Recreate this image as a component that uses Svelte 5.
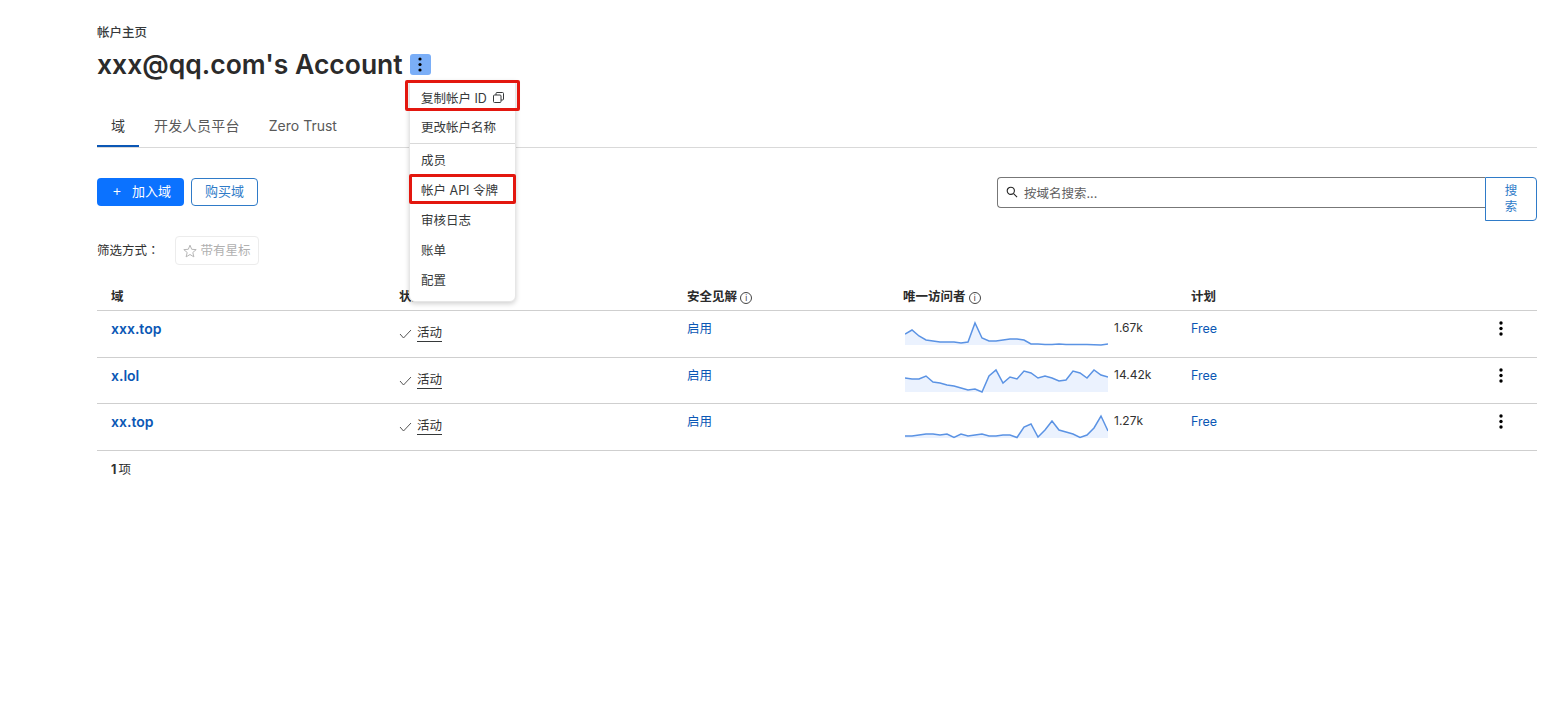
<script lang="ts">
    const menuItems = [
        { label: "复制帐户 ID", copy: true, divider: false, mark: true },
        { label: "更改帐户名称", copy: false, divider: true, mark: false },
        { label: "成员", copy: false, divider: false, mark: false },
        { label: "帐户 API 令牌", copy: false, divider: false, mark: true },
        { label: "审核日志", copy: false, divider: false, mark: false },
        { label: "账单", copy: false, divider: false, mark: false },
        { label: "配置", copy: false, divider: false, mark: false },
    ];

    // y values are px above the sparkline's baseline
    const rows = [
        {
            name: "xxx.top",
            visitors: "1.67k",
            ys: [11, 15, 9, 5, 4, 3, 3, 3, 2, 3, 22, 7, 4, 4, 5, 6, 6, 5, 1, 1, 0.6, 0.6, 1, 0.6, 0.6, 0.6, 0.6, 0.3, 0, 1],
        },
        {
            name: "x.lol",
            visitors: "14.42k",
            ys: [14, 13, 13, 16, 10, 9, 7, 6, 4, 2, 3, 0, 16, 22, 9, 15, 13, 21, 19, 14, 16, 14, 11, 12, 21, 19, 14, 22, 17, 15],
        },
        {
            name: "xx.top",
            visitors: "1.27k",
            ys: [2, 2, 3, 4, 4, 3, 4, 0.5, 4, 2, 3, 4, 2, 2, 3, 3, 0.5, 11, 14, 1, 8, 17, 8, 6, 4, 0.5, 3, 10, 22, 7],
        },
    ];

    const W = 203;
    const H = 30;

    function linePoints(ys: number[]) {
        return ys.map((y, i) => `${((i * W) / (ys.length - 1)).toFixed(1)},${H - 1 - y}`).join(" ");
    }
</script>

<main class="page">
    <div class="crumb">帐户主页</div>
    <div class="title-row">
        <h1>xxx@qq.com's Account</h1>
        <button class="kebab-btn" aria-label="更多">
            <svg width="4" height="15" viewBox="0 0 4 15"><circle cx="2" cy="2" r="1.6" /><circle cx="2" cy="7.5" r="1.6" /><circle cx="2" cy="13" r="1.6" /></svg>
        </button>
        <div class="menu">
            {#each menuItems as item}
                <div class="menu-item" class:divider={item.divider} class:mark={item.mark}>
                    <span>{item.label}</span>
                    {#if item.copy}
                        <svg width="11" height="11" viewBox="0 0 11 11" fill="none" stroke="#36393a" stroke-width="1">
                            <rect x="0.5" y="3" width="7.5" height="7.5" rx="1" />
                            <path d="M3 3V1.5a1 1 0 0 1 1-1h5.5a1 1 0 0 1 1 1V7a1 1 0 0 1-1 1H8" />
                        </svg>
                    {/if}
                </div>
            {/each}
        </div>
    </div>

    <nav class="tabs">
        <span class="tab active">域</span>
        <span class="tab wide">开发人员平台</span>
        <span class="tab">Zero Trust</span>
    </nav>

    <div class="toolbar">
        <button class="btn primary"><span class="plus">+</span>加入域</button>
        <button class="btn outline">购买域</button>
        <div class="search">
            <div class="search-input">
                <svg width="12" height="12" viewBox="0 0 13 13" fill="none" stroke="#222" stroke-width="1.2">
                    <circle cx="5.2" cy="5.2" r="3.9" />
                    <path d="M8.2 8.2 12 12" />
                </svg>
                <span>按域名搜索...</span>
            </div>
            <button class="search-btn">搜索</button>
        </div>
    </div>

    <div class="filter">
        <span class="filter-label">筛选方式：</span>
        <span class="chip">
            <svg width="14" height="14" viewBox="0 0 14 14" fill="none" stroke="#b5b5b5" stroke-width="1">
                <path d="M7 1.2 8.7 5.3 13.2 5.6 9.8 8.5 10.9 12.9 7 10.5 3.1 12.9 4.2 8.5 0.8 5.6 5.3 5.3Z" />
            </svg>
            <span class="chip-text">带有星标</span>
        </span>
    </div>

    <div class="grid head">
        <div>域</div>
        <div>状态</div>
        <div>安全见解 <span class="info">i</span></div>
        <div>唯一访问者 <span class="info">i</span></div>
        <div>计划</div>
        <div></div>
    </div>

    {#each rows as row}
        <div class="grid row">
            <div><a class="domain" href="#top">{row.name}</a></div>
            <div class="status">
                <svg width="13" height="10" viewBox="0 0 13 10" fill="none" stroke="#555" stroke-width="1">
                    <path d="M1 5 4.5 9 12 1" />
                </svg>
                <span class="status-text">活动</span>
            </div>
            <div class="enabled"><span class="link">启用</span></div>
            <div class="visitors">
                <svg width={W} height={H} viewBox="0 0 {W} {H}">
                    <polygon points="0,{H - 1} {linePoints(row.ys)} {W},{H - 1}" fill="#ebf2fe" />
                    <polyline points={linePoints(row.ys)} fill="none" stroke="#5b93e4" stroke-width="1.5" />
                </svg>
                <span class="count">{row.visitors}</span>
            </div>
            <div class="plan"><span class="link">Free</span></div>
            <div class="row-menu">
                <svg width="4" height="15" viewBox="0 0 4 15"><circle cx="2" cy="2" r="1.7" /><circle cx="2" cy="7.5" r="1.7" /><circle cx="2" cy="13" r="1.7" /></svg>
            </div>
        </div>
    {/each}

    <div class="footer"><b>1</b><span class="footer-unit">项</span></div>
</main>

<style>
    :global(body) {
        margin: 0;
        background: #fff;
        color: #313131;
        font-family: Inter, "Noto Sans CJK SC", sans-serif;
    }

    .page {
        padding: 25px 21px 0 97px;
        font-size: 12.5px;
    }

    .crumb {
        font-size: 12.5px;
        font-weight: 500;
        line-height: 16px;
        color: #36393a;
    }

    .title-row {
        position: relative;
        display: flex;
        align-items: center;
        gap: 7px;
        margin-top: 5px;
        height: 36px;
    }

    h1 {
        margin: 0;
        font-size: 26.5px;
        font-weight: 600;
        line-height: 36px;
        color: #2b2b2b;
    }

    .kebab-btn {
        display: flex;
        align-items: center;
        justify-content: center;
        width: 21px;
        height: 21px;
        padding: 0;
        border: 0;
        border-radius: 3px;
        background: #7aaef7;
    }

    .menu {
        position: absolute;
        left: 312px;
        top: 34px;
        z-index: 2;
        width: 107px;
        background: #fff;
        border: 1px solid #e6e6e6;
        border-radius: 0 0 6px 6px;
        box-shadow: 0 2px 5px rgba(0, 0, 0, 0.18);
        box-sizing: border-box;
    }

    .menu-item {
        position: relative;
        display: flex;
        align-items: center;
        gap: 6px;
        height: 30px;
        padding-left: 11px;
        box-sizing: border-box;
        font-size: 12.5px;
        color: #36393a;
        white-space: nowrap;
    }

    .menu-item:first-child {
        padding-top: 2px;
    }

    .menu-item:last-child {
        height: 37px;
        padding-bottom: 7px;
    }

    .menu-item.divider {
        height: 33px;
        padding-bottom: 1px;
        border-bottom: 1px solid #d9d9d9;
    }

    .menu-item.mark::after {
        content: "";
        position: absolute;
        left: -1px;
        right: -1px;
        top: 0;
        bottom: 0;
        border: 3px solid #e3170f;
        border-radius: 2px;
    }

    .menu-item.mark:first-child::after {
        left: -5px;
        right: -5px;
        top: -1px;
    }

    .tabs {
        display: flex;
        margin-top: 28px;
        height: 37px;
        border-bottom: 1px solid #d9d9d9;
    }

    .tab {
        padding: 0 14px;
        line-height: 32px;
        height: 35px;
        font-size: 14px;
        color: #595959;
    }

    .tab.active {
        border-bottom: 2px solid #0b57b5;
        color: #36393a;
    }

    .tab.wide {
        letter-spacing: 0.3px;
    }

    .tab + .tab {
        margin-left: 1px;
    }

    .toolbar {
        display: flex;
        align-items: flex-start;
        gap: 7px;
        margin-top: 29px;
    }

    .btn {
        height: 28px;
        margin-top: 1px;
        padding: 0 0 3px;
        border-radius: 4px;
        font: inherit;
        font-size: 13px;
        box-sizing: border-box;
    }

    .btn.primary {
        width: 87px;
        padding-left: 2px;
        border: 0;
        background: #0b72ff;
        color: #fff;
    }

    .plus {
        font-size: 15px;
        font-weight: 300;
        margin-right: 10px;
    }

    .btn.outline {
        width: 67px;
        border: 1px solid #2f7bc8;
        background: #fff;
        color: #2f7bc8;
    }

    .search {
        display: flex;
        align-items: flex-start;
        margin-left: auto;
        width: 540px;
    }

    .search-input {
        flex: 1;
        display: flex;
        align-items: center;
        gap: 6px;
        height: 31px;
        padding: 0 0 1px 8px;
        border: 1px solid #777;
        border-right: 0;
        border-radius: 4px 0 0 4px;
        box-sizing: border-box;
        font-size: 12.5px;
        color: #5f5f5f;
    }

    .search-btn {
        width: 52px;
        height: 44px;
        padding: 0 17px;
        border: 1px solid #2f7bc8;
        border-radius: 0 4px 4px 0;
        background: #fff;
        color: #2f7bc8;
        font: inherit;
        font-size: 12.5px;
        line-height: 16px;
        box-sizing: border-box;
    }

    .filter {
        display: flex;
        align-items: center;
        gap: 15px;
        margin-top: 15px;
        height: 29px;
        font-size: 12.5px;
    }

    /* TC glyphs centre the full-width colon, as the original does */
    .filter-label {
        margin-top: -2px;
        font-family: Inter, "Noto Sans CJK TC", sans-serif;
    }

    .chip {
        display: flex;
        align-items: center;
        gap: 4px;
        width: 84px;
        height: 29px;
        padding-left: 7px;
        border: 1px solid #ececec;
        border-radius: 4px;
        box-sizing: border-box;
        color: #b0b0b0;
    }

    .chip-text {
        margin-top: -3px;
    }

    .grid {
        display: grid;
        grid-template-columns: 288px 288px 216px 288px 1fr 72px;
        border-bottom: 1px solid #cfcfcf;
    }

    .grid > div {
        padding-left: 14px;
        min-width: 0;
    }

    .head {
        margin-top: 18px;
        height: 27px;
        font-size: 12.5px;
        font-weight: 600;
        line-height: 28px;
        color: #2b2b2b;
    }

    .info {
        display: inline-block;
        width: 10px;
        height: 10px;
        border: 1px solid #444;
        border-radius: 50%;
        font-size: 8px;
        font-weight: 400;
        line-height: 10px;
        text-align: center;
        vertical-align: 0;
    }

    .row {
        height: 45.67px;
        font-size: 12.5px;
    }

    .row > div {
        padding-top: 9px;
    }

    .domain {
        font-size: 14px;
        font-weight: 600;
        color: #0b57b5;
        text-decoration: none;
    }

    .status {
        display: flex;
        align-items: flex-start;
        gap: 5px;
    }

    .status svg {
        margin-top: 9px;
    }

    .status-text {
        margin-top: 4px;
        border-bottom: 1px solid #36393a;
        line-height: 17px;
        height: 17px;
    }

    .link {
        color: #0b57b5;
    }

    .row > .enabled {
        padding-top: 7px;
    }

    .row > .plan {
        padding-top: 10px;
    }

    .row > .visitors {
        display: flex;
        align-items: flex-start;
        gap: 6px;
        padding-top: 5px;
        padding-left: 16px;
    }

    .count {
        font-size: 12px;
        margin-top: 4px;
    }

    .grid > .row-menu {
        display: flex;
        justify-content: center;
        padding: 10px 0 0;
    }

    .footer {
        margin-top: 10px;
        padding-left: 14px;
        font-size: 12.5px;
        line-height: 18px;
    }

    .footer-unit {
        margin-left: 2px;
    }
</style>
